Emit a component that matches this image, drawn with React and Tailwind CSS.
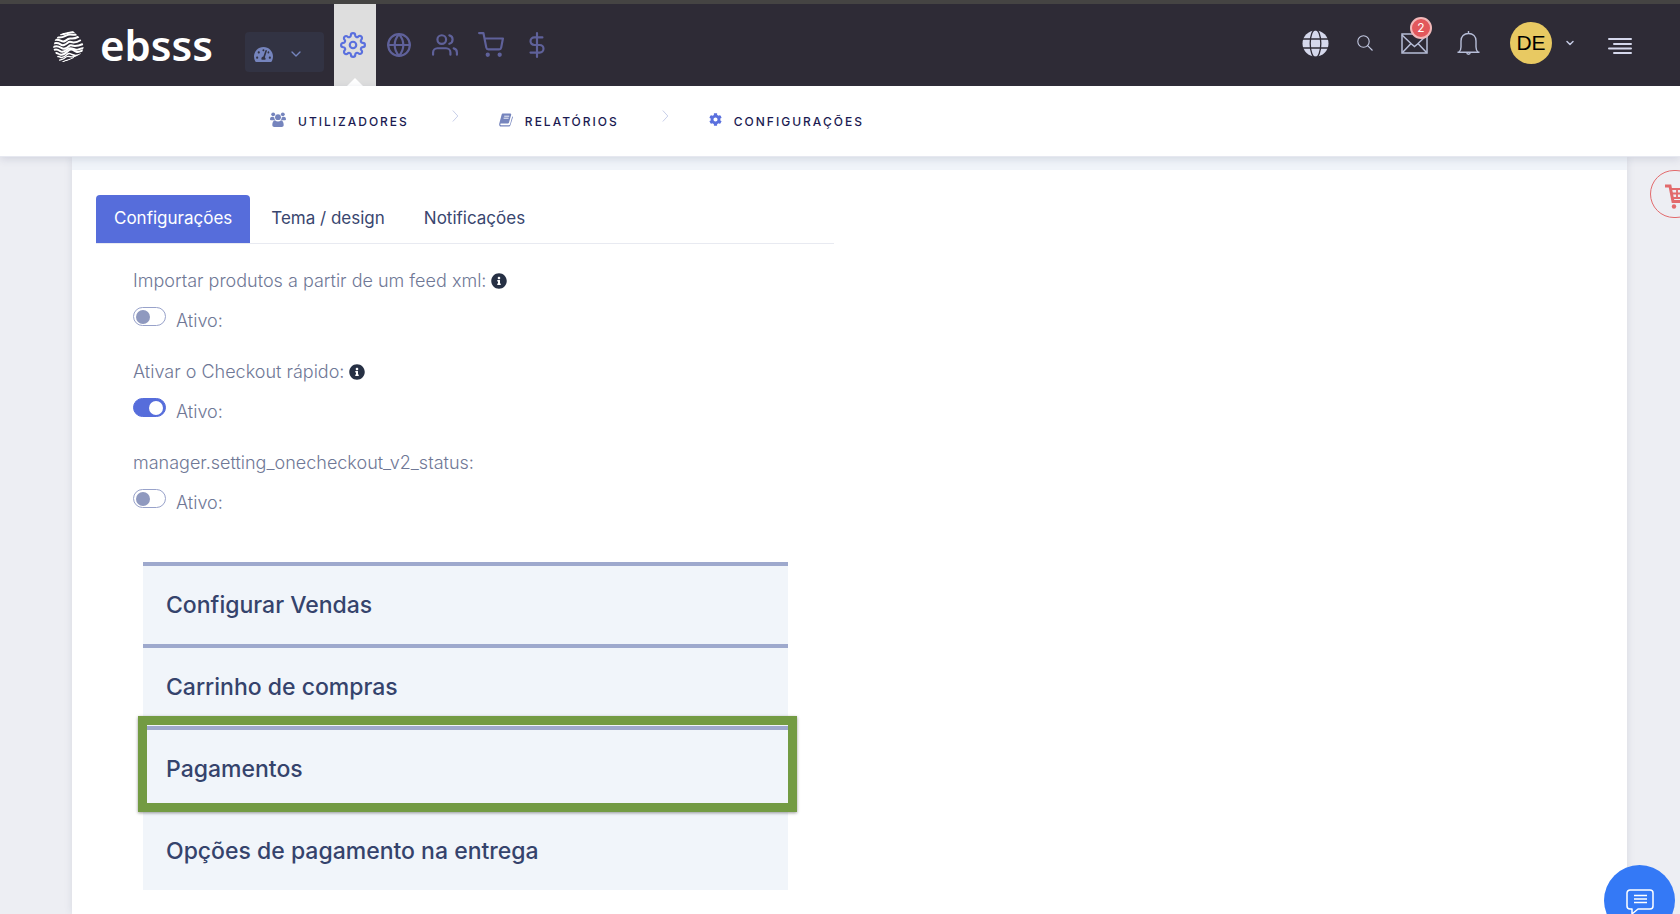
import { useState } from 'react';
import { FiChevronDown, FiDollarSign, FiGlobe, FiSettings, FiShoppingCart, FiUsers } from 'react-icons/fi';
import { FaCog, FaInfoCircle, FaTachometerAlt } from 'react-icons/fa';

const mainNav = [
  { label: 'Definições', icon: FiSettings, active: true },
  { label: 'Site', icon: FiGlobe },
  { label: 'Clientes', icon: FiUsers },
  { label: 'Vendas', icon: FiShoppingCart },
  { label: 'Finanças', icon: FiDollarSign },
];

const tabs = ['Configurações', 'Tema / design', 'Notificações'];

const initialSettings = [
  { id: 'feed', label: 'Importar produtos a partir de um feed xml:', info: true, on: false },
  { id: 'checkout', label: 'Ativar o Checkout rápido:', info: true, on: true },
  { id: 'checkout-v2', label: 'manager.setting_onecheckout_v2_status:', info: false, on: false },
];

const sections = ['Configurar Vendas', 'Carrinho de compras', 'Pagamentos', 'Opções de pagamento na entrega'];

function Logo() {
  return (
    <a href="#" className="flex items-center gap-4 pt-1 text-white">
      <svg width="31" height="32" viewBox="0 0 31 32" fill="none" aria-hidden="true">
        <clipPath id="blob">
          <path d="M6 4 12 1l8-1 2 2 5 5 4 8-2 7-8 5-9 4H7l-3-6-4-8 2-8z" />
        </clipPath>
        <g clipPath="url(#blob)" stroke="currentColor" strokeWidth="2">
          <path d="M7 3c5 1 7-2 15-2" />
          <path d="M4 6.500c8 1 8-3 13-3s3 1 7-.5" />
          <path d="M1 9c8-1 7 3 11 1s3-3 6-2.500 4 0 8-2" />
          <path d="M0 12.500c8-2 7 3 11 1.500s4-4 7-3 5 1 10-2" />
          <path d="M0 16c7-3 8 3 12 1.500s4-4 7-3 5 1 11-1.500" />
          <path d="M0 19.500c3-2 5-1 7 .5s4 1 7-1.500 5-1 8 0 4-1 9-1.500" />
          <path d="M1 24c2-4 4-1 6-.5s5-.5 8-3.500 5-1 8 .5 4-1 8-1" />
          <path d="M3 27c2-3 3-1 5-.5s4-1 6-3 3-1 5 0 4 2 9-.5" strokeWidth="1.500" />
          <path d="M5 30c3-2 3-1 5-2s3-3 6-2.500 4 1 8-1" strokeWidth="1.300" />
          <path d="M8 32c2-1 3-2 5-2.500s5-1 8-3" strokeWidth="1.200" />
        </g>
      </svg>
      <span className="pb-1 font-['Noto_Sans'] text-[42px] font-semibold leading-[50px]">ebsss</span>
    </a>
  );
}

function SolidGlobe() {
  return (
    <svg width="27" height="27" viewBox="0 0 27 27" fill="none" aria-hidden="true">
      <circle cx="13.5" cy="13.5" r="13" fill="#d5d8ec" />
      <g stroke="#2e2b36" strokeWidth="1.3">
        <ellipse cx="13.5" cy="13.5" rx="5.3" ry="14" />
        <path d="M0 9h27M0 18h27" />
      </g>
    </svg>
  );
}

function SearchIcon() {
  return (
    <svg width="16" height="16" viewBox="0 0 16 16" fill="none" stroke="#c3c9e2" strokeWidth="1.1" aria-hidden="true">
      <circle cx="6.5" cy="6.5" r="5.7" />
      <path d="m10.6 10.6 4.9 4.9" />
    </svg>
  );
}

function MailIcon() {
  return (
    <svg width="27" height="21" viewBox="0 0 27 21" fill="none" stroke="#b7bed8" strokeWidth="1.5" aria-hidden="true">
      <path d="M1 1h25v19H1z" />
      <path d="m1 2 9.5 9 3 2.500 3-2.500L26 2M10 10.500 1.500 19.500M17 10.500l8.500 9" />
    </svg>
  );
}

function BellIcon() {
  return (
    <svg width="23" height="24" viewBox="0 0 23 24" fill="none" stroke="#b7bed8" strokeWidth="1.4" aria-hidden="true">
      <path d="M11.500 0v2.500M.5 21.300h22M2 21c1.800-1.500 2-3 2-5V10c0-4.500 3-7.500 7.500-7.500S19 5.500 19 10v6c0 2 .2 3.500 2 5M9.800 21.500c0 2.300 3.400 2.300 3.400 0" />
    </svg>
  );
}

function MenuIcon() {
  return (
    <svg width="24" height="18" viewBox="0 0 24 18" stroke="#d5d8ec" strokeWidth="2" strokeLinecap="round" aria-hidden="true">
      <path d="M1 2h22M6 7h17M1 11.500h22M6 16h17" />
    </svg>
  );
}

function GroupIcon() {
  return (
    <svg width="16" height="16" viewBox="0 0 16 16" fill="#7584bd" aria-hidden="true">
      <circle cx="3.200" cy="2.300" r="1.900" />
      <circle cx="12.800" cy="2.300" r="1.900" />
      <circle cx="8" cy="5.200" r="2.900" />
      <path d="M0 7.500C0 5.500 1 4.800 2.300 4.800c.8 0 1.500.3 2 .8 0 1 .3 1.900.9 2.700H1C.4 8.300 0 8 0 7.500zM16 7.500c0-2-1-2.700-2.300-2.700-.8 0-1.500.3-2 .8 0 1-.3 1.900-.9 2.700H15c.6 0 1-.3 1-.8zM2.300 13c0-2.700.9-4.500 2.900-4.500.7.600 1.700 1 2.800 1s2.100-.4 2.800-1c2 0 2.900 1.800 2.900 4.500 0 1.300-.8 2-2 2H4.300c-1.200 0-2-.7-2-2z" />
    </svg>
  );
}

function BookIcon() {
  return (
    <svg width="14" height="14" viewBox="0 0 14 14" aria-hidden="true">
      <path d="M4 .5h7.200c.8 0 1.200.5 1 1.300L10 9.500c-.2.800-.7 1-1.400 1H2c-1 0-1 1.700 0 1.700h8c.5 0 .8-.2 1-.7l2.300-8.300c.5.300.6.700.5 1.200L11.500 12c-.2.900-.8 1.500-1.700 1.500H2C.6 13.500-.2 12 .3 10.500L2.600 1.800C2.800 1 3.300.5 4 .5z" fill="#7584bd" />
      <path d="M5.200 3.200h5M4.600 5.200h5" stroke="#fff" strokeWidth=".9" />
    </svg>
  );
}

function Separator() {
  return (
    <svg className="mb-2.5 ml-[43px] mr-10" width="7" height="12" viewBox="0 0 7 12" fill="none" stroke="#c8cfe9" aria-hidden="true">
      <path d="m.8.5 5 5.500-5 5.500" />
    </svg>
  );
}

function SubLink({ icon, children }) {
  return (
    <a href="#" className="flex items-center gap-3 pt-px text-xs font-medium uppercase tracking-[2px] text-[#1b1b52]">
      <span className="mb-1">{icon}</span>
      {children}
    </a>
  );
}

function Header() {
  return (
    <header className="flex h-[86px] items-stretch justify-between border-t-4 border-[#454443] bg-[#2e2b36] pl-[53px] pr-12">
      <div className="flex">
        <Logo />
        <div className="ml-8 mr-2.5 flex items-center pb-2.5 pt-6">
          <button aria-label="Painel" className="flex h-10 w-[79px] items-center justify-between rounded bg-[#323343] pl-[9px] pr-5 pt-1 text-[#7584bd]">
            <FaTachometerAlt size={19} />
            <FiChevronDown size={16} />
          </button>
        </div>
        <nav className="flex gap-1">
          {mainNav.map(({ label, icon: Icon, active }) => (
            <a
              key={label}
              href="#"
              aria-label={label}
              className={
                active
                  ? 'relative flex w-[42px] items-center justify-center bg-[#dedede] pr-1 text-[#5a70de]'
                  : 'flex w-[42px] items-center justify-center pr-1 text-[#5f619a]'
              }
            >
              <Icon size={26} />
              {active && (
                <span className="absolute bottom-0 left-[13px] border-x-8 border-b-8 border-x-transparent border-b-white" />
              )}
            </a>
          ))}
        </nav>
      </div>

      <div className="flex items-center pb-1">
        <button aria-label="Idioma" className="mr-7"><SolidGlobe /></button>
        <button aria-label="Pesquisar" className="mr-7"><SearchIcon /></button>
        <button aria-label="Mensagens" className="relative mr-[29px]">
          <MailIcon />
          <span className="absolute -top-4 left-[9px] flex size-[22px] items-center justify-center rounded-full border-2 border-[#f2b8b9] bg-[#e2585c] text-xs text-white">
            2
          </span>
        </button>
        <button aria-label="Notificações" className="mr-[30px]"><BellIcon /></button>
        <button aria-label="Conta" className="mr-8 flex items-center gap-3 text-[#c3c9e2]">
          <span className="flex size-[42px] items-center justify-center rounded-full bg-[#e8c962] font-['Liberation_Sans'] text-[21px] text-black">
            DE
          </span>
          <FiChevronDown size={12} strokeWidth={3} />
        </button>
        <button aria-label="Menu" className="pt-1.5"><MenuIcon /></button>
      </div>
    </header>
  );
}

export default function App() {
  const [tab, setTab] = useState(tabs[0]);
  const [settings, setSettings] = useState(initialSettings);

  const toggle = (id) => {
    setSettings(settings.map((s) => (s.id === id ? { ...s, on: !s.on } : s)));
  };

  return (
    <div className="flex min-h-screen flex-col overflow-hidden bg-[#edeef3] font-['Inter',sans-serif]">
      <Header />

      <nav className="relative flex h-[71px] items-center border-b border-[#e6e8f0] bg-white pl-[270px] shadow-[0_2px_8px_rgba(60,70,110,0.16)]">
        <SubLink icon={<GroupIcon />}>Utilizadores</SubLink>
        <Separator />
        <SubLink icon={<BookIcon />}>Relatórios</SubLink>
        <Separator />
        <SubLink icon={<FaCog size={13} color="#5a70de" />}>Configurações</SubLink>
      </nav>

      <main className="ml-[72px] mr-[53px] grow border-t-[13px] border-[#f0f4f9] bg-white px-6 pb-6 pt-[25px] shadow-[0_0_8px_rgba(60,70,110,0.12)]">
        <div className="w-[49%]">
          <div role="tablist" className="flex gap-[3px] border-b border-[#e8eaf1]">
            {tabs.map((name) => (
              <button
                key={name}
                role="tab"
                aria-selected={tab === name}
                onClick={() => setTab(name)}
                className={
                  tab === name
                    ? 'h-12 rounded-t bg-[#566ddb] px-[18px] text-[17px] text-white'
                    : 'h-12 px-[18px] text-[17px] text-[#39466f]'
                }
              >
                {name}
              </button>
            ))}
          </div>

          <div className="flex flex-col gap-[23px] px-[37px] pt-[23px]">
            {settings.map((s) => (
              <div key={s.id} className="text-lg font-light leading-7 text-[#6f7896]">
                <p className="flex items-center gap-[5px]">
                  {s.label}
                  {s.info && <FaInfoCircle size={16} color="#263044" />}
                </p>
                <label className="mt-3 flex items-start gap-2.5">
                  <input
                    type="checkbox"
                    checked={s.on}
                    onChange={() => toggle(s.id)}
                    className="flex h-[19px] w-[33px] appearance-none items-center rounded-full border border-[#98a2ca] px-0.5 before:size-3.5 before:rounded-full before:bg-[#8f99bf] checked:justify-end checked:border-[#566ddb] checked:bg-[#566ddb] checked:before:bg-white"
                  />
                  Ativo:
                </label>
              </div>
            ))}
          </div>

          <div className="ml-[47px] mr-[46px] mt-[45px]">
            {sections.map((title) => (
              <div key={title} className="relative border-t-4 border-[#9ea9cd] bg-[#f1f5fa]">
                <button className="h-[78px] w-full px-[23px] text-left text-[23px] font-medium text-[#35436c]">{title}</button>
                {title === 'Pagamentos' && (
                  <span className="pointer-events-none absolute -bottom-1 -left-[5px] -right-[9px] -top-3.5 z-10 border-[9px] border-[#739b43] shadow-[0_1px_3px_rgba(0,0,0,0.4)]" />
                )}
              </div>
            ))}
          </div>
        </div>
      </main>

      <button aria-label="Carrinho" className="fixed -right-5 top-[170px] flex h-12 w-[50px] items-center rounded-full border border-[#e26a6c] pl-3.5 pt-1">
        <svg width="27" height="25" viewBox="0 0 27 25" className="shrink-0" fill="none" stroke="#e26a6c" aria-hidden="true">
          <path d="M0 2h5l3 15.500h15" strokeWidth="3" />
          <path d="M5.500 5H26l-2 9H7.500M6 9.500h19M12 5v9M18 5v9" strokeWidth="1.800" />
          <circle cx="9" cy="22.500" r="2.200" fill="#e26a6c" stroke="none" />
          <circle cx="21" cy="22.500" r="2.200" fill="#e26a6c" stroke="none" />
        </svg>
      </button>

      <button aria-label="Chat" className="fixed -bottom-[22px] right-[5px] flex size-[71px] items-start justify-center rounded-full bg-[#3479f6] pt-6">
        <svg width="28" height="26" viewBox="0 0 28 26" fill="none" stroke="#fff" strokeWidth="1.500" strokeLinejoin="round" aria-hidden="true">
          <path d="M4 1h20a3 3 0 0 1 3 3v13a3 3 0 0 1-3 3H12l-6 5v-5H4a3 3 0 0 1-3-3V4a3 3 0 0 1 3-3z" />
          <path d="M8 6.500h13M8 10h13M8 13.500h13" />
        </svg>
      </button>
    </div>
  );
}
